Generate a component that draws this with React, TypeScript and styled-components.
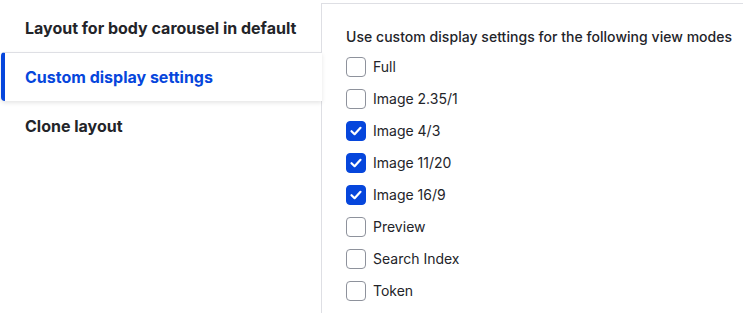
import styled, { createGlobalStyle } from "styled-components";

const GlobalStyle = createGlobalStyle`
  body {
    margin: 0;
    background: #ffffff;
    font-family: Inter, "Noto Sans", sans-serif;
    color: #232429;
  }
`;

const Wrapper = styled.div`
  display: flex;
  align-items: flex-start;
  width: 743px;
  height: 313px;
  overflow: hidden;
  padding-top: 3px;
  box-sizing: border-box;
`;

const Menu = styled.ul`
  list-style: none;
  margin: 0;
  padding: 0;
  width: 321px;
  flex-shrink: 0;
  position: relative;
  z-index: 1;
`;

const MenuItem = styled.li<{ $active?: boolean }>`
  height: 49px;
  display: flex;
  align-items: center;
  box-sizing: border-box;
  font-size: 16px;
  font-weight: 700;
  padding-left: ${(p) => (p.$active ? "20px" : "25px")};
  margin-left: ${(p) => (p.$active ? "1px" : "0")};
  margin-right: ${(p) => (p.$active ? "-1px" : "0")};
  color: ${(p) => (p.$active ? "#0646dc" : "#232429")};
  background: ${(p) => (p.$active ? "#ffffff" : "transparent")};
  border-left: ${(p) => (p.$active ? "4px solid #0646dc" : "none")};
  border-radius: ${(p) => (p.$active ? "4px 0 0 4px" : "0")};
  border-top: ${(p) => (p.$active ? "1px solid #dedfe4" : "none")};
  box-shadow: ${(p) =>
    p.$active ? "0 2px 4px rgba(0, 0, 0, 0.1)" : "none"};
  position: relative;
  z-index: ${(p) => (p.$active ? 2 : 1)};
`;

const Panel = styled.div`
  flex: 1;
  min-height: 320px;
  border-top: 1px solid #dedfe4;
  border-left: 1px solid #dedfe4;
  padding: 23px 0 0 24px;
`;

const Heading = styled.div`
  font-size: 14px;
  line-height: 20px;
  font-weight: 500;
  letter-spacing: 0.04px;
  margin-bottom: 10px;
  white-space: nowrap;
`;

const Options = styled.div`
  display: flex;
  flex-direction: column;
  gap: 12px;
`;

const Option = styled.label`
  display: flex;
  align-items: center;
  gap: 7px;
  font-size: 14px;
  line-height: 20px;
  color: #232429;
`;

const Box = styled.span<{ $checked?: boolean }>`
  width: 20px;
  height: 20px;
  box-sizing: border-box;
  border-radius: 4px;
  border: 1px solid ${(p) => (p.$checked ? "#0646dc" : "#8e929c")};
  background: ${(p) => (p.$checked ? "#0646dc" : "#ffffff")};
  display: flex;
  align-items: center;
  justify-content: center;
`;

const tabs = ["Layout for body carousel in default", "Custom display settings", "Clone layout"];

const modes = [
  { label: "Full", checked: false },
  { label: "Image 2.35/1", checked: false },
  { label: "Image 4/3", checked: true },
  { label: "Image 11/20", checked: true },
  { label: "Image 16/9", checked: true },
  { label: "Preview", checked: false },
  { label: "Search Index", checked: false },
  { label: "Token", checked: false },
];

export default function App() {
  return (
    <>
      <GlobalStyle />
      <Wrapper>
        <Menu>
          {tabs.map((t, i) => (
            <MenuItem key={t} $active={i === 1}>
              {t}
            </MenuItem>
          ))}
        </Menu>
        <Panel>
          <Heading>Use custom display settings for the following view modes</Heading>
          <Options>
            {modes.map((m) => (
              <Option key={m.label}>
                <Box $checked={m.checked}>
                  {m.checked && (
                    <svg width="14" height="14" viewBox="0 0 14 14">
                      <path
                        d="M2.5 7.2 L5.6 10.2 L11.5 3.8"
                        fill="none"
                        stroke="#ffffff"
                        strokeWidth="2.2"
                        strokeLinecap="round"
                        strokeLinejoin="round"
                      />
                    </svg>
                  )}
                </Box>
                {m.label}
              </Option>
            ))}
          </Options>
        </Panel>
      </Wrapper>
    </>
  );
}
